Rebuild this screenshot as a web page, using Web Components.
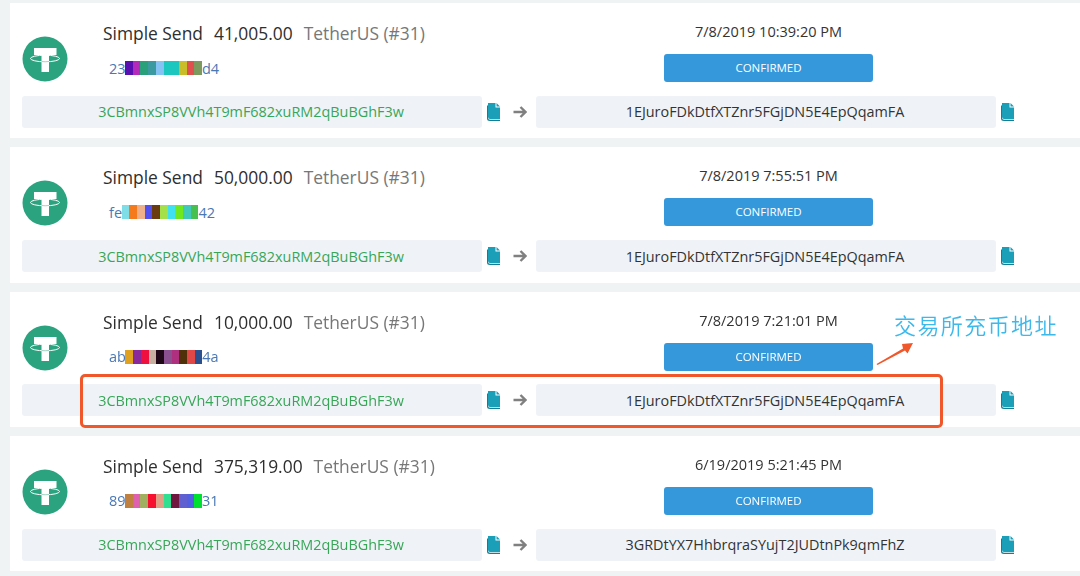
<!DOCTYPE html>
<html lang="en"><head><meta charset="utf-8"><title>Transactions</title>
<style>
html,body{margin:0;padding:0;background:#f0f3f4;font-family:"Open Sans","Noto Sans CJK SC",sans-serif;}
</style></head><body>
<tx-list>
<tx-card amount="41,005.00" date="7/8/2019 10:39:20 PM" to="1EJuroFDkDtfXTZnr5FGjDN5E4EpQqamFA" hs="23" he="d4" cells="#5a10b0,#b52ab8,#2aa07a,#3a9aa0,#86c3f5,#1cc7c0,#1cc7c0,#c9bd2a,#e0504f,#7d9a5e"></tx-card>
<tx-card amount="50,000.00" date="7/8/2019 7:55:51 PM" to="1EJuroFDkDtfXTZnr5FGjDN5E4EpQqamFA" hs="fe" he="42" cells="#7fdde8,#f57a1e,#eeb08a,#5050f0,#6a3a10,#a5e04a,#40e0f0,#70e820,#40c8b8,#48c050"></tx-card>
<tx-card amount="10,000.00" date="7/8/2019 7:21:01 PM" to="1EJuroFDkDtfXTZnr5FGjDN5E4EpQqamFA" hs="ab" he="4a" cells="#e0a020,#8a2a9a,#f01040,#c8b0a0,#200818,#8a5090,#b03080,#503008,#e04848,#2a5090"></tx-card>
<tx-card amount="375,319.00" date="6/19/2019 5:21:45 PM" to="3GRDtYX7HhbrqraSYujT2JUDtnPk9qmFhZ" hs="89" he="31" cells="#c08040,#e060b0,#a0b060,#f81030,#e0a088,#30e090,#701840,#6060d0,#5060e0,#00e030"></tx-card>
<tx-callout slot="overlay"></tx-callout>
</tx-list>
<script>
class TxList extends HTMLElement{constructor(){super();this.attachShadow({mode:'open'}).innerHTML=`<style>
:host{display:flex;flex-direction:column;position:relative;padding:3px 0 0 10px;height:576px;box-sizing:border-box;overflow:hidden;filter:blur(.3px)}
slot:not([name]){display:flex;flex-direction:column;gap:9px}
</style><slot></slot><slot name="overlay"></slot>`}}
class TetherLogo extends HTMLElement{constructor(){super();this.attachShadow({mode:'open'}).innerHTML=`<style>
:host{display:block;width:46px;height:46px;flex:none}svg{display:block}
</style><svg width="46" height="46" viewBox="0 0 46 46"><circle cx="23" cy="23" r="22.500" fill="#2ca37f"/>
<path d="M12 12H34.500V19H27V36H19.500V19H12Z" fill="#fff"/>
<ellipse cx="23" cy="22.500" rx="14.500" ry="3.300" fill="none" stroke="#fff" stroke-width="1"/>
<path d="M19.500 25.500Q23 26 27 25.500" fill="none" stroke="#9fd4c3" stroke-width="1"/></svg>`}}
class CopyIcon extends HTMLElement{constructor(){super();this.attachShadow({mode:'open'}).innerHTML=`<style>
:host{display:block;width:13px;height:18px;flex:none}svg{display:block}
</style><svg width="13" height="18" viewBox="0 0 13 18"><path d="M1 0H8.500V4.500H13V16H3Q1 16 1 14Z" fill="#1b9fb9"/><path d="M9.500 0L13 3.500H9.500Z" fill="#1b9fb9"/><path d="M0 2.500V15.500Q0 18 3 18H13V16.800H3Q1 16.800 1 15V2.500Z" fill="#137f95"/></svg>`}}
class ArrowIcon extends HTMLElement{constructor(){super();this.attachShadow({mode:'open'}).innerHTML=`<style>
:host{display:block;width:14px;height:12px;flex:none}svg{display:block}
</style><svg width="14" height="12" viewBox="0 0 14 12"><path d="M0.500 6H12.500M7.500 1L12.500 6L7.500 11" fill="none" stroke="#808080" stroke-width="2.400"/></svg>`}}
class AddrBox extends HTMLElement{constructor(){super();this.attachShadow({mode:'open'}).innerHTML=`<style>
:host{display:flex;align-items:center;justify-content:center;width:460px;height:32px;box-sizing:border-box;padding-right:2px;flex:none;background:#eff3f8;border-radius:3px;font-size:14.400px;color:var(--c,#333)}
</style><slot></slot>`}}
class StatusBtn extends HTMLElement{constructor(){super();this.attachShadow({mode:'open'}).innerHTML=`<style>
:host{display:flex;align-items:center;justify-content:center;width:209px;height:28px;box-sizing:border-box;padding-bottom:1px;background:#3498db;border-radius:3px;color:#fff;font-size:11.500px}
</style><slot></slot>`}}
class HashMosaic extends HTMLElement{static get observedAttributes(){return['cells','hs','he']}
constructor(){super();this.attachShadow({mode:'open'}).innerHTML=`<style>
:host{display:flex;align-items:center;color:#4a78b5;font-size:14.500px;height:20px}
i{display:block;width:7.700px;height:14px}
.r{display:flex;margin-left:-.5px}
</style><span></span><span class="r"></span><span></span>`}
attributeChangedCallback(){const s=this.shadowRoot.querySelectorAll('span');s[0].textContent=this.getAttribute('hs')||'';s[2].textContent=this.getAttribute('he')||'';
s[1].innerHTML=(this.getAttribute('cells')||'').split(',').filter(Boolean).map(c=>`<i style="background:${c}"></i>`).join('')}}
class TxCard extends HTMLElement{constructor(){super();this.attachShadow({mode:'open'}).innerHTML=`<style>
:host{display:flex;flex-direction:column;height:135.330px;box-sizing:border-box;background:#fff;padding:0 0 10.500px 12px}
.top{flex:1;display:flex;min-height:0}
.logo{padding-top:33px;width:81px;flex:none}
.info{width:561px;flex:none;padding-top:19px;box-sizing:border-box}
.title{font-size:17.400px;line-height:23px;color:#2e2e2e;display:flex;gap:11px;white-space:nowrap}
.cur{color:#777}
.st{width:209px;display:flex;flex-direction:column;align-items:center;padding-top:19px;box-sizing:border-box;flex:none}
.date{font-size:14.500px;line-height:20px;color:#333;margin-bottom:12px;white-space:nowrap}
.row{display:flex;align-items:center}
copy-icon{margin:0 13px 0 5px}
arrow-icon{margin-right:9px}
</style>
<div class="top"><div class="logo"><tether-logo></tether-logo></div>
<div class="info"><div class="title"><span>Simple Send</span><span id="a"></span><span class="cur">TetherUS (#31)</span></div><hash-mosaic id="h" style="margin:13px 0 0 6px"></hash-mosaic></div>
<div class="st"><div class="date" id="d"></div><status-btn>CONFIRMED</status-btn></div></div>
<div class="row"><addr-box style="--c:#38a657">3CBmnxSP8VVh4T9mF682xuRM2qBuBGhF3w</addr-box><copy-icon></copy-icon><arrow-icon></arrow-icon><addr-box id="t"></addr-box><copy-icon></copy-icon></div>`}
connectedCallback(){const r=this.shadowRoot;r.getElementById('a').textContent=this.getAttribute('amount');r.getElementById('d').textContent=this.getAttribute('date');r.getElementById('t').textContent=this.getAttribute('to');
const h=r.getElementById('h');for(const k of['hs','he','cells'])h.setAttribute(k,this.getAttribute(k))}}
class TxCallout extends HTMLElement{constructor(){super();this.attachShadow({mode:'open'}).innerHTML=`<style>
:host{display:block;position:absolute;inset:0;pointer-events:none}
.box{position:absolute;left:80px;top:374px;width:863px;height:54px;box-sizing:border-box;border:3px solid #f0582c;border-radius:5px}
.t{position:absolute;left:894px;top:310px;font:350 22px/28px "Noto Sans CJK SC",sans-serif;color:#3bb9ec;letter-spacing:1.400px;white-space:nowrap}
svg{position:absolute;left:874px;top:340px}
</style><div class="box"></div><div class="t">交易所充币地址</div>
<svg width="42" height="28" viewBox="0 0 42 28"><path d="M2.500 24L29 8.500L28 4L39 3L33.500 13.500L31 10.500L3.500 25Z" fill="#f0582c"/></svg>`}}
[['tx-list',TxList],['tether-logo',TetherLogo],['copy-icon',CopyIcon],['arrow-icon',ArrowIcon],['addr-box',AddrBox],['status-btn',StatusBtn],['hash-mosaic',HashMosaic],['tx-callout',TxCallout],['tx-card',TxCard]].forEach(([n,c])=>customElements.define(n,c));
</script>
</body></html>
